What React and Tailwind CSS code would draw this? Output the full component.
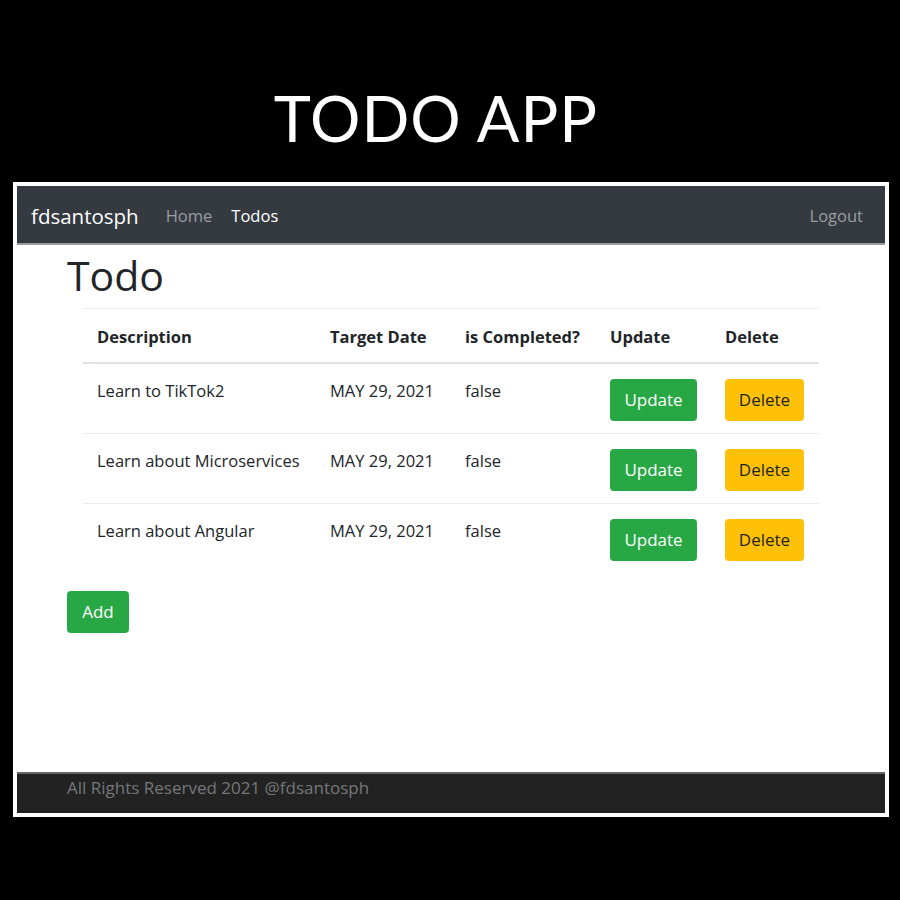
export default function App() {
  const rows = [
    { d: "Learn to TikTok2", t: "MAY 29, 2021", c: "false" },
    { d: "Learn about Microservices", t: "MAY 29, 2021", c: "false" },
    { d: "Learn about Angular", t: "MAY 29, 2021", c: "false" },
  ];
  const f = { fontFamily: '"Open Sans", "Noto Sans", sans-serif' };
  return (
    <div className="w-[900px] h-[900px] bg-black flex flex-col items-center overflow-hidden" style={f}>
      <div className="h-[182px] w-full flex justify-center pt-[82px] pr-[28px]">
        <h1 className="text-white text-[63px] leading-[72px] tracking-[1px]" style={{ fontFamily: 'Lato, "Noto Sans", sans-serif' }}>TODO APP</h1>
      </div>
      <div className="w-[876px] h-[635px] bg-white p-[4px] flex flex-col ml-[2px]">
        <nav className="h-[59px] bg-[#343a40] border-b-[2px] border-[#9a9a9a] flex items-center px-[14px] pt-[3px] shrink-0">
          <span className="text-white text-[20.5px] mr-[27px]">fdsantosph</span>
          <span className="text-[#9a9da1] text-[16.5px] mr-[19px]">Home</span>
          <span className="text-white text-[16.5px]">Todos</span>
          <span className="ml-auto text-[#9a9da1] text-[16.5px] mr-[8px]">Logout</span>
        </nav>
        <main className="flex-1 pl-[50px] pr-[66px]">
          <h2 className="text-[#212529] text-[41px] leading-[52px] mt-[4px] mb-[7px] font-medium">Todo</h2>
          <table className="ml-[16px] w-[736px] text-[#212529] text-[16.5px] border-collapse table-fixed">
            <thead>
              <tr className="border-t border-[#e9ecef] border-b-[2px] border-b-[#dee2e6] h-[54px]">
                <th className="w-[233px] text-left font-bold px-[14px] pt-[4px]">Description</th>
                <th className="w-[135px] text-left font-bold px-[14px] pt-[4px]">Target Date</th>
                <th className="w-[145px] text-left font-bold px-[14px] pt-[4px]">is Completed?</th>
                <th className="w-[115px] text-left font-bold px-[14px] pt-[4px]">Update</th>
                <th className="w-[108px] text-left font-bold px-[14px] pt-[4px]">Delete</th>
              </tr>
            </thead>
            <tbody>
              {rows.map((r, i) => (
                <tr key={i} className={i < rows.length - 1 ? "border-b border-[#e9ecef]" : ""}>
                  <td className="px-[14px] pt-[14px] pb-[14px] align-top leading-[26px] whitespace-nowrap">{r.d}</td>
                  <td className="px-[14px] pt-[14px] pb-[14px] align-top leading-[26px] whitespace-nowrap">{r.t}</td>
                  <td className="px-[14px] pt-[14px] pb-[14px] align-top leading-[26px]">{r.c}</td>
                  <td className="px-[14px] pt-[15px] pb-[12px] align-top">
                    <button className="w-[87px] h-[42px] bg-[#28a745] text-white rounded-[4px] text-[17px]">Update</button>
                  </td>
                  <td className="px-[14px] pt-[15px] pb-[12px] align-top">
                    <button className="w-[79px] h-[42px] bg-[#ffc107] text-[#212529] rounded-[4px] text-[17px]">Delete</button>
                  </td>
                </tr>
              ))}
            </tbody>
          </table>
          <button className="mt-[18px] w-[62px] h-[42px] bg-[#28a745] text-white rounded-[4px] text-[17px]">Add</button>
        </main>
        <footer className="h-[41px] bg-[#222222] border-t-[2px] border-[#666666] flex items-center pl-[50px] pb-[11px] shrink-0">
          <span className="text-[#74777b] text-[17px]">All Rights Reserved 2021 @fdsantosph</span>
        </footer>
      </div>
    </div>
  );
}
